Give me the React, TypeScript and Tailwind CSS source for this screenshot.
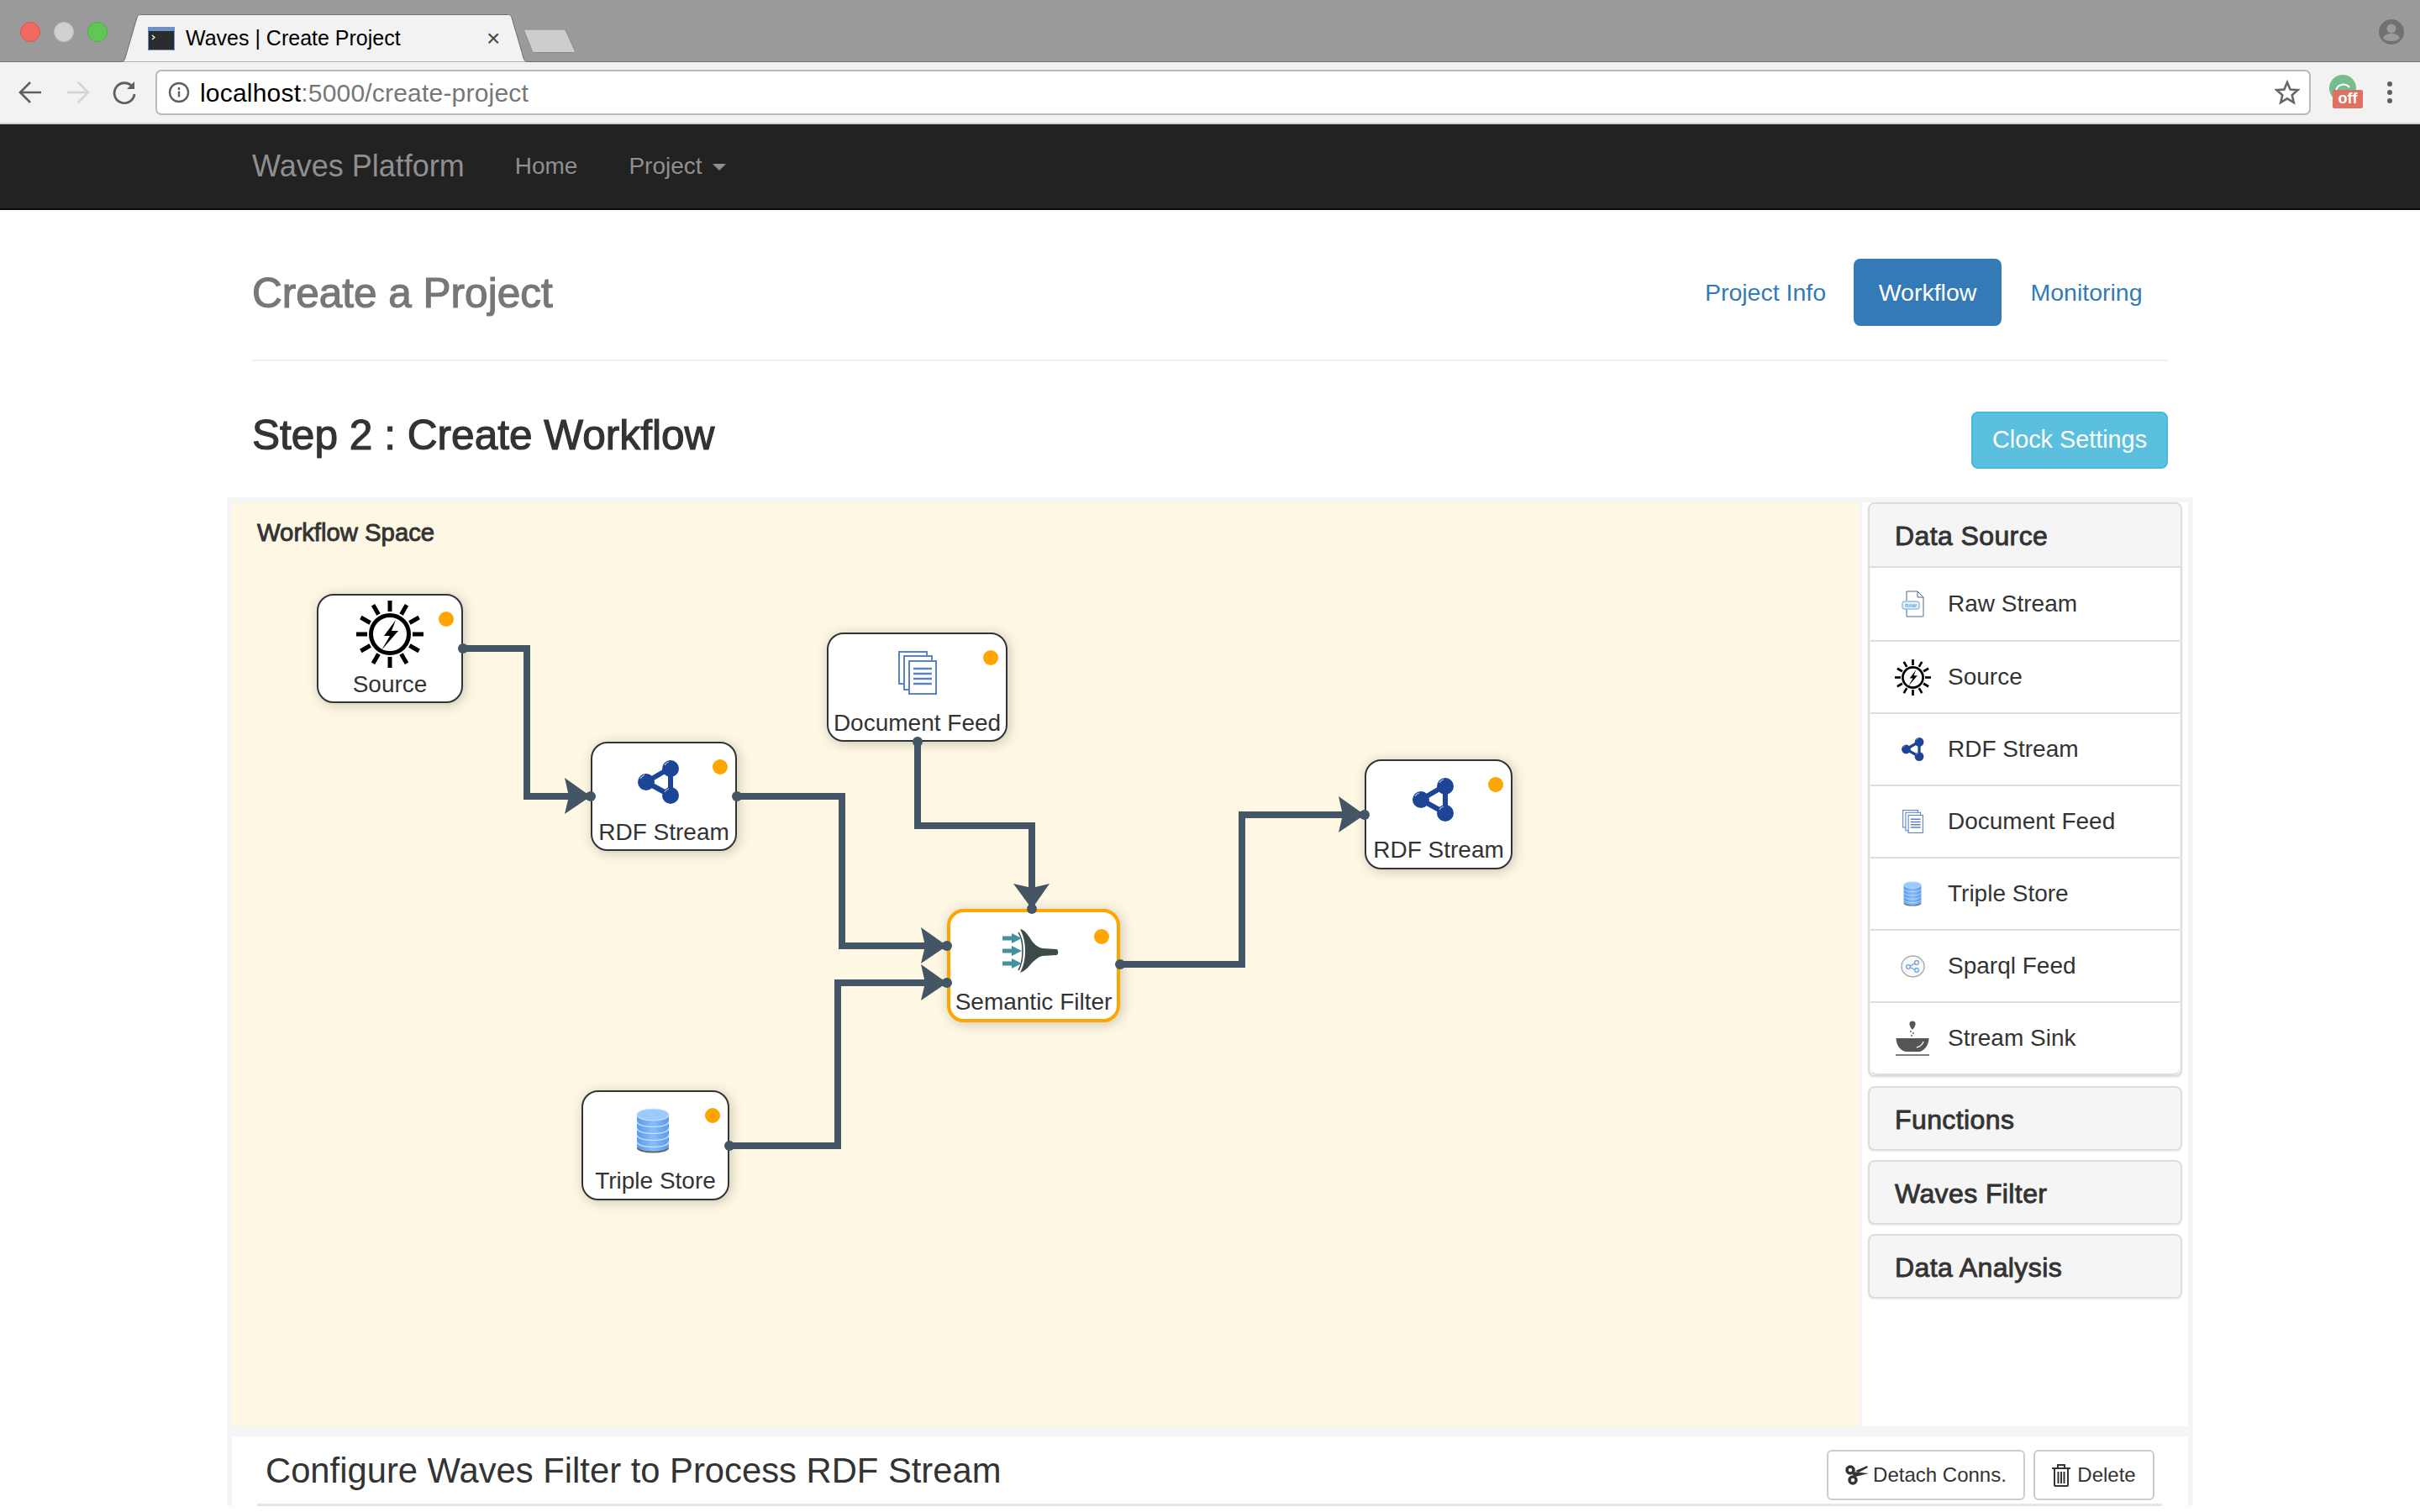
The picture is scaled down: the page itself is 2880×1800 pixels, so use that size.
import type { ReactNode } from "react";

const angles = [0, 30, 60, 90, 120, 150, 180, 210, 240, 270, 300, 330];

function SunIcon({ className }: { className: string }) {
  return (
    <svg viewBox="0 0 80 80" className={className}>
      <circle cx="40" cy="40" r="22.5" fill="none" stroke="#000" strokeWidth="5" />
      <polygon points="47,23 33,42 40,42 30,59 50,36 42,36" fill="#000" />
      {angles.map((a) => (
        <rect key={a} x="37.5" y="0" width="5" height="13" fill="#000" transform={`rotate(${a} 40 40)`} />
      ))}
    </svg>
  );
}

function RdfIcon({ className }: { className: string }) {
  return (
    <svg viewBox="0 0 50 52" className={className}>
      <polygon points="10,26 39,9 39,42" fill="none" stroke="#1c4595" strokeWidth="6" strokeLinejoin="round" />
      <circle cx="10" cy="26" r="10" fill="#1c4595" />
      <circle cx="39" cy="10" r="10" fill="#1c4595" />
      <circle cx="39" cy="42" r="10" fill="#1c4595" />
      <path d="M3 22a8 8 0 0 1 5-4M32 6a8 8 0 0 1 5-4M32 38a8 8 0 0 1 5-4" fill="none" stroke="#b9c9e8" strokeWidth="1.2" />
    </svg>
  );
}

function DocsIcon({ className }: { className: string }) {
  return (
    <svg viewBox="0 0 46 52" className={className}>
      <rect x="1" y="1" width="33" height="38" fill="#fff" stroke="#5b82c4" strokeWidth="2" />
      <rect x="7" y="6" width="33" height="40" fill="#fff" stroke="#5b82c4" strokeWidth="2" />
      <rect x="13" y="12" width="32" height="39" fill="#fff" stroke="#5b82c4" strokeWidth="2" />
      <path d="M18 21h22M18 27h22M18 33h22M18 39h22" stroke="#5b82c4" strokeWidth="2.6" />
    </svg>
  );
}

function FilterIcon({ className }: { className: string }) {
  return (
    <svg viewBox="0 0 67 52" className={className}>
      <path d="M21 0C26 1 29 5 33 11C37 18 42 22 48 23L64 24C67 24 67 31 64 31L48 32C42 33 36 39 31 45C27 49 24 51 21 52C25 44 27 36 27 26C27 16 25 8 21 0Z" fill="#3c4a4a" />
      <path d="M19 4C22 8 24 17 24 26C24 35 22 44 19 49" fill="none" stroke="#3c4a4a" strokeWidth="1.5" />
      <path d="M0 11h12M0 26h12M0 41h12" stroke="#44919c" strokeWidth="5" />
      <path d="M11 5l12 6l-12 6zM11 20l12 6l-12 6zM11 35l12 6l-12 6z" fill="#44919c" />
    </svg>
  );
}

function StoreIcon({ className, id }: { className: string; id: string }) {
  return (
    <svg viewBox="0 0 40 54" className={className}>
      <defs>
        <linearGradient id={id} x1="0" x2="1" y1="0" y2="0">
          <stop offset="0" stopColor="#5b9bee" />
          <stop offset="0.5" stopColor="#86bcf8" />
          <stop offset="1" stopColor="#5b9bee" />
        </linearGradient>
      </defs>
      <ellipse cx="20" cy="48" rx="19" ry="5.5" fill="#666" />
      <path d="M1 8v37c0 4 8 6.5 19 6.5s19-2.5 19-6.5V8z" fill={`url(#${id})`} />
      <ellipse cx="20" cy="8" rx="19" ry="7" fill="#9ccbfb" stroke="#cfe3fb" strokeWidth="1.2" />
      <path d="M1 16c0 4 8 6.5 19 6.5s19-2.5 19-6.5M1 24c0 4 8 6.5 19 6.5s19-2.5 19-6.5M1 32c0 4 8 6.5 19 6.5s19-2.5 19-6.5M1 40c0 4 8 6.5 19 6.5s19-2.5 19-6.5" fill="none" stroke="#d9e9fc" strokeWidth="1.2" />
    </svg>
  );
}

function RawIcon({ className }: { className: string }) {
  return (
    <svg viewBox="0 0 27 32" className={className}>
      <path d="M6 12V1h13l7 7v22a1 1 0 0 1-1 1H6V22" fill="none" stroke="#4a6a88" strokeWidth="1" />
      <path d="M19 1v7h7" fill="none" stroke="#4a6a88" strokeWidth="1" />
      <rect x="1" y="13" width="20" height="9" rx="2" fill="#eaf4fc" stroke="#5aa5e2" strokeWidth="1" />
      <text x="11" y="20" textAnchor="middle" fontSize="6" fontWeight="700" fill="#5aa5e2">RAW</text>
    </svg>
  );
}

function SparqlIcon({ className }: { className: string }) {
  return (
    <svg viewBox="0 0 29 27" className={className}>
      <ellipse cx="14.5" cy="13.5" rx="13.5" ry="12.5" fill="#f7f8fa" stroke="#aaaaaa" strokeWidth="1.4" />
      <path d="M10 14l8-5M10 14l8 4" stroke="#6a9bd8" strokeWidth="1.2" />
      <circle cx="9" cy="14" r="2.3" fill="#fff" stroke="#6a9bd8" strokeWidth="1.2" />
      <circle cx="19" cy="9" r="2.3" fill="#fff" stroke="#6a9bd8" strokeWidth="1.2" />
      <circle cx="19" cy="18" r="2.3" fill="#fff" stroke="#6a9bd8" strokeWidth="1.2" />
    </svg>
  );
}

function BowlIcon({ className }: { className: string }) {
  return (
    <svg viewBox="0 0 40 42" className={className}>
      <circle cx="20" cy="4" r="3.6" fill="#555" />
      <path d="M17 7h6l-3 4z" fill="#555" />
      <circle cx="18" cy="13" r="0.9" fill="#555" />
      <circle cx="21" cy="15" r="0.9" fill="#555" />
      <circle cx="19" cy="18" r="0.9" fill="#555" />
      <path d="M0.5 21H39.5C39.5 30 33 37 27 37H13C7 37 0.5 30 0.5 21Z" fill="#555" />
      <path d="M25 32C29 31 32 28 33 25" fill="none" stroke="#fff" strokeWidth="1.3" />
      <path d="M0 41h40" stroke="#555" strokeWidth="1.6" />
    </svg>
  );
}

const sidebarRows: { label: string; icon: ReactNode }[] = [
  { label: "Raw Stream", icon: <RawIcon className="w-[27px] h-[32px]" /> },
  { label: "Source", icon: <SunIcon className="w-[43px] h-[43px]" /> },
  { label: "RDF Stream", icon: <RdfIcon className="w-[27px] h-[28px]" /> },
  { label: "Document Feed", icon: <DocsIcon className="w-[25px] h-[28px]" /> },
  { label: "Triple Store", icon: <StoreIcon id="store-small" className="w-[22px] h-[30px]" /> },
  { label: "Sparql Feed", icon: <SparqlIcon className="w-[29px] h-[27px]" /> },
  { label: "Stream Sink", icon: <BowlIcon className="w-[40px] h-[42px]" /> },
];

const collapsed = ["Functions", "Waves Filter", "Data Analysis"];

function FlowNode({
  label,
  pos,
  icon,
  selected,
}: {
  label: string;
  pos: string;
  icon: ReactNode;
  selected?: boolean;
}) {
  return (
    <div
      className={`absolute ${pos} flex flex-col items-center bg-white rounded-[20px] shadow-[2px_2px_14px_#c9c5b4] ${
        selected ? "border-4 border-[#ffa500]" : "border-2 border-[#333]"
      }`}
    >
      <div className={`w-full flex items-center justify-center ${selected ? "h-[92px]" : "h-[91px]"}`}>{icon}</div>
      <div className="text-[28px] leading-[30px] text-[#333] whitespace-nowrap">{label}</div>
      <span
        className={`absolute w-[18px] h-[18px] rounded-full bg-[#ffa500] ${
          selected ? "top-[20px] right-[9px]" : "top-[19px] right-[9px]"
        }`}
      />
    </div>
  );
}

// connector routes, in canvas coordinates
const routes = [
  { d: "M275 174H351V350H427", from: [275, 174], to: [427, 350], dir: "right" },
  { d: "M601 350H726V528H851", from: [601, 350], to: [851, 528], dir: "right" },
  { d: "M816 285V385H952V484", from: [816, 285], to: [952, 484], dir: "down" },
  { d: "M592 766H721V572H851", from: [592, 766], to: [851, 572], dir: "right" },
  { d: "M1057 550H1202V372H1348", from: [1057, 550], to: [1348, 372], dir: "right" },
];

function Connectors() {
  return (
    <svg className="absolute inset-0 w-full h-full pointer-events-none" viewBox="0 0 1936 1100">
      {routes.map((r) => {
        const [x, y] = r.to;
        const head =
          r.dir === "right"
            ? `${x},${y} ${x - 31},${y - 22} ${x - 26},${y} ${x - 31},${y + 21}`
            : `${x},${y} ${x - 22},${y - 30} ${x},${y - 25} ${x + 21},${y - 30}`;
        return (
          <g key={r.d}>
            <path d={r.d} fill="none" stroke="#445566" strokeWidth="8" />
            <polygon points={head} fill="#445566" />
            <circle cx={r.from[0]} cy={r.from[1]} r="6" fill="#445566" />
            <circle cx={x} cy={y} r="6" fill="#445566" />
          </g>
        );
      })}
    </svg>
  );
}

function BrowserChrome() {
  return (
    <>
      <div className="h-[74px] bg-[#9a9a9a] border-b border-[#6e6e6e] flex">
        <div className="flex gap-[16px] pl-[24px] mt-[26px] self-start">
          <span className="w-6 h-6 rounded-full bg-[#f1695f] border border-[#d9534a]" />
          <span className="w-6 h-6 rounded-full bg-[#d0d0d0] border border-[#c0c0c0]" />
          <span className="w-6 h-6 rounded-full bg-[#62c654] border border-[#4fae43]" />
        </div>
        <div className="relative ml-[15px] w-[486px] h-[57px] self-end -mb-px flex items-center">
          <svg className="absolute inset-0 w-full h-full" viewBox="0 0 486 57">
            <path d="M0 56.5H1C4 56.5 5 55 6 52L20 4C21 1 22 0.5 26 0.5H460C464 0.5 465 1 466 4L480 52C481 55 482 56.5 485 56.5H486V57H0Z" fill="#f2f2f2" stroke="#6e6e6e" />
          </svg>
          <svg viewBox="0 0 32 28" className="relative ml-[33px] w-8 h-7">
            <rect width="32" height="28" fill="#6d93c9" />
            <rect x="1" y="5" width="30" height="22" fill="#2c2c2c" />
            <path d="M5 10l3 2.5l-3 2.5" fill="none" stroke="#fff" strokeWidth="1.2" />
          </svg>
          <span className="relative ml-[13px] text-[25px] leading-none text-black whitespace-nowrap">Waves | Create Project</span>
          <span className="absolute left-[436px] top-[15px] text-[28px] leading-[28px] text-[#444]">×</span>
        </div>
        <svg viewBox="0 0 63 30" className="w-[63px] h-[30px] -ml-[6px] mt-[33px] self-start">
          <path d="M1 2H47C49 2 50 3 51 5L61 27C62 29 61 29.5 59 29.5H13C11 29.5 10.5 29 10 27L0.5 3C0 2 0 2 1 2Z" fill="#cdcdcd" stroke="#8a8a8a" />
        </svg>
        <svg viewBox="0 0 30 30" className="ml-auto mr-[19px] mt-[23px] w-[30px] h-[30px] self-start">
          <circle cx="15" cy="15" r="15" fill="#717171" />
          <circle cx="15" cy="11" r="5.5" fill="#9a9a9a" />
          <path d="M5 22c2-4 6-5 10-5s8 1 10 5c-2 3-6 4-10 4s-8-1-10-4z" fill="#9a9a9a" />
        </svg>
      </div>
      <div className="h-[74px] bg-[#f2f2f2] border-b-2 border-[#cfcfcf] flex items-center pl-[22px]">
        <svg viewBox="0 0 28 28" className="w-7 h-7" fill="none" stroke="#5f5f5f" strokeWidth="2.6">
          <path d="M27 14H3M14 2L2 14l12 12" />
        </svg>
        <svg viewBox="0 0 28 28" className="w-7 h-7 ml-[29px]" fill="none" stroke="#d4d4d4" strokeWidth="2.6">
          <path d="M1 14h24M14 2l12 12l-12 12" />
        </svg>
        <svg viewBox="0 0 28 28" className="w-7 h-7 ml-[27px]" fill="none" stroke="#5f5f5f" strokeWidth="2.8">
          <path d="M24 8A12 12 0 1 0 26 16" />
          <path d="M26 1v9h-9z" fill="#5f5f5f" stroke="none" />
        </svg>
        <div className="ml-[23px] w-[2565px] h-[54px] bg-white border-2 border-[#b9b9b9] rounded-[7px] flex items-center pl-[13px] pr-[11px]">
          <svg viewBox="0 0 26 26" className="w-[26px] h-[26px]" fill="none" stroke="#5f5f5f" strokeWidth="2.4">
            <circle cx="13" cy="13" r="11" />
            <path d="M13 11.5v7M13 7v3" />
          </svg>
          <div className="ml-[12px] mt-[1px] text-[30px] leading-none tracking-[0.2px] whitespace-nowrap">
            <span className="text-black">localhost</span>
            <span className="text-[#777]">:5000/create-project</span>
          </div>
          <svg viewBox="0 0 30 30" className="ml-auto w-[30px] h-[30px]">
            <polygon points="15,3 18.6,11.5 27.5,12.2 20.7,18.2 22.8,27 15,22.3 7.2,27 9.3,18.2 2.5,12.2 11.4,11.5" fill="none" stroke="#666" strokeWidth="2.6" />
          </svg>
        </div>
        <div className="relative ml-[22px] w-[44px] h-[42px]">
          <svg viewBox="0 0 32 32" className="absolute left-0 top-0 w-8 h-8">
            <circle cx="16" cy="16" r="16" fill="#76bc8e" />
            <path d="M8 20a9 9 0 0 1 16-5" fill="none" stroke="#fff" strokeWidth="2" />
          </svg>
          <span className="absolute left-[4px] top-[18px] w-[36px] h-[22px] rounded-[2px] bg-[#e07060] text-white text-[18px] leading-[20px] font-bold text-center">
            off
          </span>
        </div>
        <div className="ml-[25px] flex flex-col gap-[4px]">
          <span className="w-[6px] h-[6px] rounded-full bg-[#5f5f5f]" />
          <span className="w-[6px] h-[6px] rounded-full bg-[#5f5f5f]" />
          <span className="w-[6px] h-[6px] rounded-full bg-[#5f5f5f]" />
        </div>
      </div>
    </>
  );
}

export default function App() {
  return (
    <div className="h-screen overflow-hidden bg-white font-['Liberation_Sans',Arial,sans-serif] text-[#333]">
      <BrowserChrome />

      {/* Navbar */}
      <nav className="h-[102px] bg-[#222] border-b-2 border-[#080808] flex items-center pl-[300px] text-[#8f8f8f]">
        <span className="text-[36px]">Waves Platform</span>
        <span className="ml-[60px] text-[28px]">Home</span>
        <span className="ml-[61px] text-[28px]">Project</span>
        <span className="ml-[12px] mt-[2px] w-0 h-0 border-x-[8px] border-x-transparent border-t-[8px] border-t-[#8f8f8f]" />
      </nav>

      {/* Page header */}
      <div className="ml-[300px] w-[2280px]">
        <div className="flex items-center justify-between pt-[58px] pb-[40px] border-b-2 border-[#eee]">
          <h1 className="pt-[2px] text-[49.5px] leading-none text-[#777] [-webkit-text-stroke:1.2px_#777]">Create a Project</h1>
          <div className="flex gap-[4px] text-[28.5px]">
            <a className="w-[202px] h-[80px] flex items-center justify-center text-[#337ab7]">Project Info</a>
            <a className="w-[176px] h-[80px] flex items-center justify-center bg-[#337ab7] text-white rounded-lg">Workflow</a>
            <a className="w-[194px] h-[80px] flex items-center justify-center text-[#337ab7]">Monitoring</a>
          </div>
        </div>
        <div className="flex items-center justify-between pt-[60px] pb-[34px]">
          <h2 className="pb-[11px] text-[49.6px] leading-none text-[#333] [-webkit-text-stroke:1.2px_#333]">Step 2 : Create Workflow</h2>
          <button className="w-[234px] h-[68px] bg-[#5bc0de] border-2 border-[#46b8da] rounded-lg text-white text-[28.8px]">
            Clock Settings
          </button>
        </div>
      </div>

      {/* Workflow area */}
      <div className="ml-[270px] w-[2340px] bg-[#f5f5f5] pt-[6px] px-[6px]">
        <div className="flex gap-[4px] h-[1100px]">
          <div className="relative w-[1936px] bg-[#fdf7e3]">
            <div className="pl-[30px] pt-[18px] text-[29.3px] leading-[36px] [-webkit-text-stroke:0.9px_#333]">Workflow Space</div>
            <FlowNode label="Source" pos="left-[101px] top-[109px] w-[174px] h-[130px]" icon={<SunIcon className="w-[80px] h-[80px]" />} />
            <FlowNode label="RDF Stream" pos="left-[427px] top-[285px] w-[174px] h-[130px]" icon={<RdfIcon className="w-[50px] h-[52px] mr-[12px]" />} />
            <FlowNode label="Document Feed" pos="left-[708px] top-[155px] w-[215px] h-[130px]" icon={<DocsIcon className="w-[46px] h-[52px]" />} />
            <FlowNode label="Semantic Filter" pos="left-[851px] top-[484px] w-[206px] h-[135px]" selected icon={<FilterIcon className="w-[67px] h-[52px] mr-[7px]" />} />
            <FlowNode label="Triple Store" pos="left-[416px] top-[700px] w-[176px] h-[131px]" icon={<StoreIcon id="store-big" className="w-[40px] h-[54px] mr-[7px]" />} />
            <FlowNode label="RDF Stream" pos="left-[1348px] top-[306px] w-[176px] h-[131px]" icon={<RdfIcon className="w-[50px] h-[52px] mr-[12px]" />} />
            <Connectors />
          </div>

          <aside className="w-[388px] bg-white px-[7px] flex flex-col gap-[11px]">
            <div className="border-2 border-[#ddd] rounded-lg bg-[#f5f5f5] shadow-[0_1px_2px_rgba(0,0,0,0.08)]">
              <div className="h-[76px] pl-[30px] pt-[2px] flex items-center text-[32px] tracking-[0.4px] [-webkit-text-stroke:0.9px_#333] border-b-2 border-[#ddd]">
                Data Source
              </div>
              <ul className="mx-[1px] bg-white rounded-b-lg border-b-2 border-[#ddd]">
                {sidebarRows.map((row, i) => (
                  <li key={row.label} className={`h-[86px] flex items-center text-[28px] ${i > 0 ? "border-t-2 border-[#ddd]" : ""}`}>
                    <span className="w-[92px] pl-[8px] flex items-center justify-center">{row.icon}</span>
                    {row.label}
                  </li>
                ))}
              </ul>
            </div>
            {collapsed.map((name) => (
              <div key={name} className="h-[77px] border-2 border-[#ddd] rounded-lg bg-[#f5f5f5] pl-[30px] pt-[2px] flex items-center text-[32px] tracking-[0.4px] [-webkit-text-stroke:0.9px_#333] shadow-[0_1px_2px_rgba(0,0,0,0.08)]">
                {name}
              </div>
            ))}
          </aside>
        </div>

        {/* Filter config panel */}
        <div className="mt-[12px] w-[2328px] bg-white pl-[30px] pr-[31px]">
          <div className="h-[83px] pl-[10px] pr-[9px] border-b-[3px] border-[#e5e5e5] flex items-center justify-between">
            <h3 className="pt-[2px] text-[41.75px] leading-none text-[#333]">Configure Waves Filter to Process RDF Stream</h3>
            <div className="flex gap-[10px] pt-[12px] text-[24px]">
              <button className="w-[236px] h-[60px] border-2 border-[#ccc] rounded-md flex items-center justify-center gap-[5px]">
                <svg viewBox="0 0 28 24" className="w-7 h-6" fill="#333">
                  <circle cx="6" cy="6" r="4" fill="none" stroke="#333" strokeWidth="3.5" />
                  <circle cx="9" cy="18" r="4" fill="none" stroke="#333" strokeWidth="3.5" />
                  <path d="M9 8L28 10L12 14L9 12zM12 7L26 1L27 3L16 9z" />
                </svg>
                Detach Conns.
              </button>
              <button className="w-[144px] h-[60px] border-2 border-[#ccc] rounded-md flex items-center justify-center gap-[8px]">
                <svg viewBox="0 0 22 27" className="w-[22px] h-[27px]" fill="none" stroke="#333" strokeWidth="2">
                  <path d="M0 5h22M7 5V1h8v4M3 5v20a1 1 0 0 0 1 1h14a1 1 0 0 0 1-1V5M7.5 9v14M11 9v14M14.5 9v14" />
                </svg>
                Delete
              </button>
            </div>
          </div>
        </div>
      </div>
    </div>
  );
}
